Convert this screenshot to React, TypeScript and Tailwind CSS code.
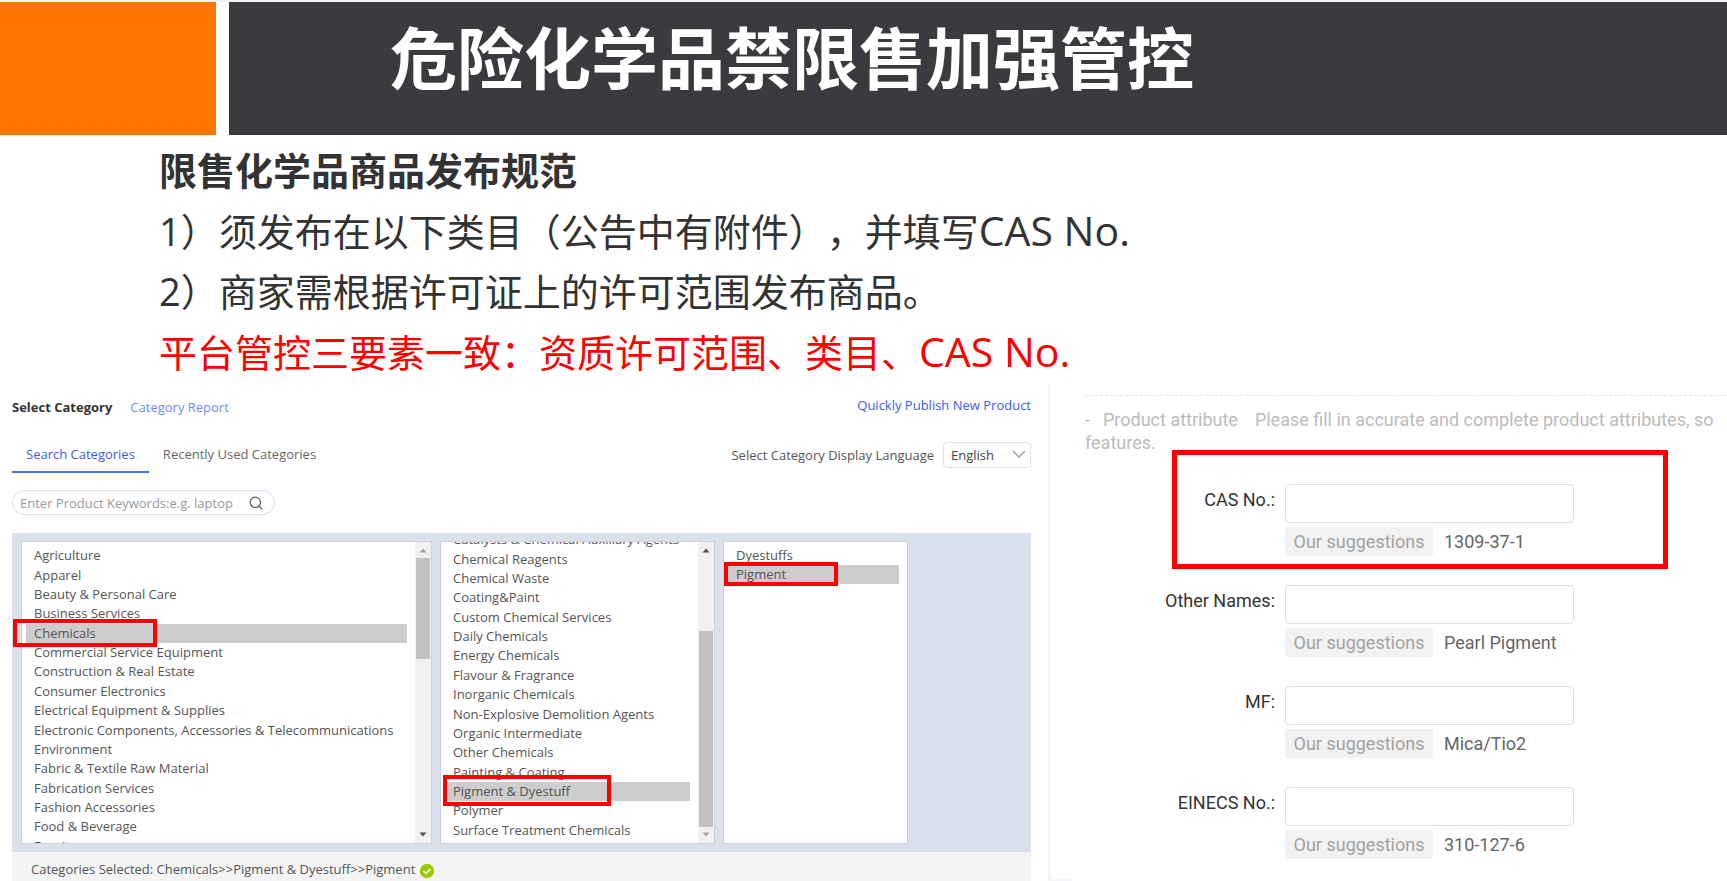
import { useState } from "react";

const industries = [
  "Agriculture",
  "Apparel",
  "Beauty & Personal Care",
  "Business Services",
  "Chemicals",
  "Commercial Service Equipment",
  "Construction & Real Estate",
  "Consumer Electronics",
  "Electrical Equipment & Supplies",
  "Electronic Components, Accessories & Telecommunications",
  "Environment",
  "Fabric & Textile Raw Material",
  "Fabrication Services",
  "Fashion Accessories",
  "Food & Beverage",
  "Furniture",
];

const chemicals = [
  "Catalysts & Chemical Auxiliary Agents",
  "Chemical Reagents",
  "Chemical Waste",
  "Coating&Paint",
  "Custom Chemical Services",
  "Daily Chemicals",
  "Energy Chemicals",
  "Flavour & Fragrance",
  "Inorganic Chemicals",
  "Non-Explosive Demolition Agents",
  "Organic Intermediate",
  "Other Chemicals",
  "Painting & Coating",
  "Pigment & Dyestuff",
  "Polymer",
  "Surface Treatment Chemicals",
];

const pigments = ["Dyestuffs", "Pigment"];

const attributes = [
  { id: "cas", label: "CAS No.:", suggestion: "1309-37-1" },
  { id: "names", label: "Other Names:", suggestion: "Pearl Pigment" },
  { id: "mf", label: "MF:", suggestion: "Mica/Tio2" },
  { id: "einecs", label: "EINECS No.:", suggestion: "310-127-6" },
];

type ListProps = {
  label: string;
  items: string[];
  selected: string;
  className: string;
  listClass: string;
  highlightClass: string;
  thumb?: { className: string; upClass: string; downClass: string };
};

function CategoryList({ label, items, selected, className, listClass, highlightClass, thumb }: ListProps) {
  return (
    <div className={`relative h-[303px] min-w-0 ${className}`}>
      <div className="flex h-full overflow-hidden border border-[#cdd0d6] bg-white">
        <ul aria-label={label} className={`grid min-w-0 flex-1 auto-rows-fr px-1 ${listClass}`}>
          {items.map((item) => (
            <li key={item} className="min-h-0">
              <button
                type="button"
                aria-pressed={item === selected}
                className={`block h-full w-full px-2 text-left text-[13px] leading-[19px] whitespace-nowrap text-[#555] ${
                  item === selected ? "bg-[#cdcdcd]" : ""
                }`}
              >
                {item}
              </button>
            </li>
          ))}
        </ul>
        {thumb && (
          <div className="flex w-4 shrink-0 flex-col items-center bg-[#f1f1f1]">
            <svg viewBox="0 0 16 16" className={`h-4 w-4 shrink-0 ${thumb.upClass}`} fill="currentColor" aria-hidden="true">
              <path d="M4.5 10.5 8 6.5l3.5 4z" />
            </svg>
            <div className="flex min-h-0 w-full flex-1 flex-col items-center">
              <div className={`w-[14px] bg-[#c1c1c1] ${thumb.className}`} />
            </div>
            <svg viewBox="0 0 16 16" className={`h-4 w-4 shrink-0 ${thumb.downClass}`} fill="currentColor" aria-hidden="true">
              <path d="M4.5 5.5 8 9.5l3.5-4z" />
            </svg>
          </div>
        )}
      </div>
      <div className={`pointer-events-none absolute border-[#fe0000] ${highlightClass}`} />
    </div>
  );
}

function CategoryPanel() {
  const [keyword, setKeyword] = useState("");
  return (
    <section className="flex min-w-0 flex-col pr-[17px] pl-3 font-['Open_Sans','Noto_Sans',sans-serif] text-[13px] leading-5 text-[#555]">
      <header className="flex h-12 items-start justify-between">
        <div className="flex items-center gap-[18px] pt-[13px]">
          <h2 className="font-bold text-[#333]">Select Category</h2>
          <a href="#report" className="text-[#7389f7]">Category Report</a>
        </div>
        <a href="#publish" className="pt-[11px] text-[#3d5bf0]">Quickly Publish New Product</a>
      </header>

      <div className="flex items-center justify-between">
        <nav className="flex">
          <button type="button" className="h-[41px] border-b-2 border-[#4a6cf3] px-[14px] pt-1 text-[#3d5bf0]">
            Search Categories
          </button>
          <button type="button" className="h-[41px] border-b-2 border-transparent px-[14px] pt-1 text-[#666]">
            Recently Used Categories
          </button>
        </nav>
        <div className="flex items-center gap-[9px] pt-1">
          <label htmlFor="language">Select Category Display Language</label>
          <div className="relative">
            <select
              id="language"
              defaultValue="English"
              className="h-[26px] w-[88px] appearance-none rounded border border-[#e2e2e6] bg-white pl-[7px] text-[#444]"
            >
              <option>English</option>
            </select>
            <svg viewBox="0 0 14 8" className="pointer-events-none absolute top-2 right-[5px] h-2 w-[14px]" fill="none" stroke="#999" strokeWidth="1.3" aria-hidden="true">
              <path d="M1 1l6 6 6-6" />
            </svg>
          </div>
        </div>
      </div>

      <form className="mt-[17px] flex h-[25px] w-[263px] items-center rounded-full border border-[#dadff5] bg-white pr-[11px] pl-[7px]">
        <input
          type="text"
          aria-label="Product keywords"
          placeholder="Enter Product Keywords:e.g. laptop"
          value={keyword}
          onChange={(e) => setKeyword(e.target.value)}
          className="min-w-0 flex-1 bg-transparent text-[13px] outline-none placeholder:text-[#999]"
        />
        <button type="button" aria-label="Search">
          <svg viewBox="0 0 14 14" className="h-[14px] w-[14px]" fill="none" stroke="#555" strokeWidth="1.2" aria-hidden="true">
            <circle cx="6.3" cy="6.3" r="5.2" />
            <path d="M10 10l3.4 3.4" />
          </svg>
        </button>
      </form>

      <div className="mt-[18px] flex gap-2 bg-[#dae1ed] px-[9px] py-2">
        <CategoryList
          label="Industries"
          items={industries}
          selected="Chemicals"
          className="flex-[411]"
          listClass="mt-1 mr-1 h-[310px]"
          highlightClass="-left-2 top-[78px] h-7 w-36 border-4"
          thumb={{ className: "h-[101px]", upClass: "text-[#a3a3a3]", downClass: "text-[#505050]" }}
        />
        <CategoryList
          label="Chemicals"
          items={chemicals}
          selected="Pigment & Dyestuff"
          className="flex-[275]"
          listClass="-mt-3 mr-1 h-[310px]"
          highlightClass="left-[3px] top-[234px] h-[31px] w-[168px] border-4"
          thumb={{ className: "mt-auto h-[196px]", upClass: "text-[#505050]", downClass: "text-[#a3a3a3]" }}
        />
        <CategoryList
          label="Pigment and dyestuff"
          items={pigments}
          selected="Pigment"
          className="flex-[185]"
          listClass="mt-1 mr-1 h-[38px]"
          highlightClass="left-px top-[21px] h-6 w-[114px] border-4"
        />
        <div className="flex-[106]" />
      </div>

      <footer className="flex flex-1 items-start bg-[#f4f4f4] pt-[7px] pl-[19px]">
        <p>Categories Selected: Chemicals&gt;&gt;Pigment &amp; Dyestuff&gt;&gt;Pigment</p>
        <svg viewBox="0 0 16 16" className="mt-1 ml-1 h-4 w-4" aria-hidden="true">
          <circle cx="8" cy="8" r="7.2" fill="#9c0" />
          <path d="M4.6 8.2l2.4 2.3 4.4-4.4" fill="none" stroke="#fff" strokeWidth="1.6" />
        </svg>
      </footer>
    </section>
  );
}

function AttributePanel() {
  return (
    <section className="flex min-w-0 flex-col overflow-hidden border-l-[3px] border-[#f3f5fb] font-['Roboto',sans-serif] text-[18px] leading-[23px]">
      <div className="mt-[11px] ml-[34px] border-t border-dashed border-[#e6e6e6] pt-3 text-[#bbb]">
        <p className="whitespace-nowrap">
          <span className="mr-[13px]">-</span>
          <span className="mr-[17px]">Product attribute</span>
          Please fill in accurate and complete product attributes, so
        </p>
        <p>features.</p>
      </div>
      <div className="relative mt-[30px] ml-[34px] grid gap-[29px]">
        {attributes.map(({ id, label, suggestion }) => (
          <div key={id} className="grid grid-cols-[190px_1fr] gap-x-[10px] gap-y-1">
            <label htmlFor={id} className="pt-1 text-right text-[#333]">{label}</label>
            <input
              id={id}
              type="text"
              className="h-[39px] w-[289px] rounded border border-[#dedede] bg-white px-3 outline-none"
            />
            <div className="col-start-2 flex items-center gap-[11px] text-[#666]">
              <span className="flex h-[29px] w-[148px] items-center justify-center rounded-xs bg-[#f2f2f2] text-[#a3a3a3]">
                Our suggestions
              </span>
              <span>{suggestion}</span>
            </div>
          </div>
        ))}
        <div className="pointer-events-none absolute -top-[34px] left-[87px] h-[119px] w-[496px] border-[5px] border-[#fe0000]" />
      </div>
      <div className="mt-auto h-0.5 w-[21px] bg-[#f3f5fb]" />
    </section>
  );
}

export default function App() {
  return (
    <main className="flex min-h-screen flex-col bg-white font-['Open_Sans','Noto_Sans_CJK_SC',sans-serif]">
      <header className="flex h-[135px] gap-[13px] border-t-2 border-[#f3f3f3]">
        <div className="w-[216px] shrink-0 bg-[#ff7500]" />
        <div className="flex-1 bg-[#3d3a3f] pl-[161px]">
          <h1 className="pt-4 text-[67px] leading-[80px] font-bold whitespace-nowrap text-white">危险化学品禁限售加强管控</h1>
        </div>
      </header>

      <section className="h-[249px] pt-[5px] pl-[159px] text-[38px] leading-[60px] whitespace-nowrap text-[#333] [text-spacing-trim:space-all]">
        <h2 className="font-bold">限售化学品商品发布规范</h2>
        <p>1）须发布在以下类目（公告中有附件），并填写<span className="text-[41px]">CAS No.</span></p>
        <p>2）商家需根据许可证上的许可范围发布商品。</p>
        <p className="text-[#fe0000]">平台管控三要素一致：资质许可范围、类目、<span className="text-[41px]">CAS No.</span></p>
      </section>

      <div className="grid flex-1 grid-cols-[1048fr_679fr]">
        <CategoryPanel />
        <AttributePanel />
      </div>
    </main>
  );
}
